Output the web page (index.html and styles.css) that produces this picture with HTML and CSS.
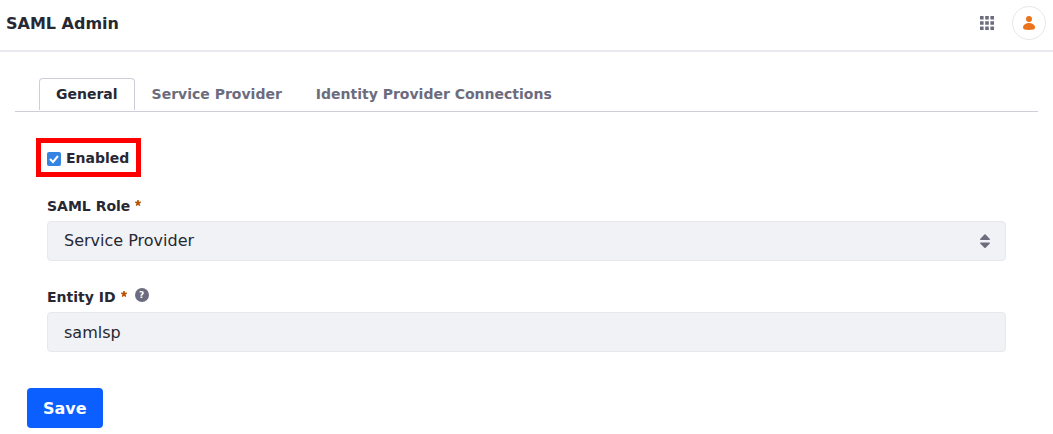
FILE: index.html
```html
<!DOCTYPE html>
<html lang="en">
<head>
<meta charset="utf-8">
<title>SAML Admin</title>
<link rel="stylesheet" href="styles.css">
</head>
<body>
<header class="topbar">
  <h1 class="title">SAML Admin</h1>
  <div class="actions">
    <button class="icon-button" type="button" aria-label="Applications">
      <svg width="14" height="14" viewBox="0 0 14 14" fill="#6b6c7e"><path d="M0 0h3.6v3.6H0zM5.2 0h3.6v3.6H5.2zM10.4 0H14v3.6h-3.6zM0 5.2h3.6v3.6H0zM5.2 5.2h3.6v3.6H5.2zM10.4 5.2H14v3.6h-3.6zM0 10.4h3.6V14H0zM5.2 10.4h3.6V14H5.2zM10.4 10.4H14V14h-3.6z"/></svg>
    </button>
    <button class="icon-button avatar" type="button" aria-label="User profile">
      <svg width="12" height="14" viewBox="0 0 12 14" fill="#eb731c"><circle cx="6" cy="3" r="3"/><path d="M6 7c3.500 0 6 2.300 6 4.500C12 13.300 10 14 6 14s-6-.7-6-2.500C0 9.300 2.500 7 6 7z"/></svg>
    </button>
  </div>
</header>
<main>
  <nav class="tabs">
    <a class="tab active" href="#general">General</a>
    <a class="tab" href="#service-provider">Service Provider</a>
    <a class="tab" href="#connections">Identity Provider Connections</a>
  </nav>
  <form class="form">
    <div class="highlight">
      <label class="check-label"><input class="check" type="checkbox" checked>Enabled</label>
    </div>
    <div class="field">
      <div class="label-row">
        <label for="role">SAML Role</label>
        <svg class="required" width="6" height="6" viewBox="0 0 6 6"><path d="M2.300 0h1.400l.2 1.700L5.700 1.500 6 2.700l-1.600.8L5.300 5.200l-1 .8L3 4.700 1.700 6l-1-.8.9-1.700L0 2.700l.3-1.200 1.800.2z"/></svg>
      </div>
      <div class="select-wrap">
        <select class="control" id="role"><option>Service Provider</option><option>Identity Provider</option></select>
        <svg class="arrows" width="10" height="14" viewBox="0 0 10 14"><path d="M.5 6Q-.3 5.500.4 4.800L4.400.400Q5 0 5.600.400l4 4.400q.7.700-.1 1.200zM.5 8.500h9q.8.500.1 1.200l-4 4q-.6.500-1.200 0l-4-4Q-.3 9 .5 8.500z"/></svg>
      </div>
    </div>
    <div class="field">
      <div class="label-row">
        <label for="entity">Entity ID</label>
        <svg class="required" width="6" height="6" viewBox="0 0 6 6"><path d="M2.300 0h1.400l.2 1.700L5.700 1.500 6 2.700l-1.600.8L5.300 5.200l-1 .8L3 4.700 1.700 6l-1-.8.9-1.700L0 2.700l.3-1.200 1.800.2z"/></svg>
        <span class="help">?</span>
      </div>
      <input class="control" id="entity" type="text" value="samlsp">
    </div>
    <button class="save" type="submit">Save</button>
  </form>
</main>
</body>
</html>
```
FILE: styles.css
```css
* { box-sizing: border-box; }
body {
  margin: 0;
  background: #fff;
  color: #272833;
  font: 16px/24px "DejaVu Sans", sans-serif;
}
.topbar {
  display: flex;
  align-items: center;
  justify-content: space-between;
  height: 52px;
  padding: 0 7px 6px 6px;
  border-bottom: 2px solid #e9e9ef;
}
.title { margin: 3px 0 0; font-size: 16px; line-height: 24px; }
.actions { display: flex; align-items: center; gap: 18px; padding-top: 2px; }
.icon-button {
  display: flex;
  align-items: center;
  justify-content: center;
  padding: 0;
  border: 0;
  background: none;
}
.avatar {
  width: 34px;
  height: 34px;
  border: 1px solid #e7e7ed;
  border-radius: 50%;
}
.tabs {
  display: flex;
  margin: 26px 15px 0;
  padding: 0 24px 1px;
  border-bottom: 1px solid #cdced9;
}
.tab {
  padding: 3px 16px 4px;
  border: 1px solid transparent;
  border-bottom: 0;
  border-radius: 4px 4px 0 0;
  color: #6b6c7e;
  font-size: 14px;
  font-weight: bold;
  line-height: 24px;
  text-decoration: none;
}
.tab.active { border-color: #cdced9; color: #272833; }
.form { padding: 26px 47px 6px; }
.highlight {
  width: fit-content;
  margin-left: -11px;
  padding: 6px 7px 5px 6px;
  border: 5px solid #f00;
}
.check-label {
  display: flex;
  align-items: center;
  gap: 5px;
  font-size: 14px;
  font-weight: bold;
  line-height: 18px;
}
.check {
  appearance: none;
  width: 14px;
  height: 14px;
  margin: 2px 0 0;
  border-radius: 2px;
  background: #3584e4 url("data:image/svg+xml,%3Csvg xmlns='http://www.w3.org/2000/svg' viewBox='0 0 14 14'%3E%3Cpath d='M3 7l3 3 5-6' fill='none' stroke='white' stroke-width='2'/%3E%3C/svg%3E");
}
.field { margin-top: 20px; }
.field + .field { margin-top: 27px; }
.label-row {
  display: flex;
  height: 24px;
  font-size: 14px;
  font-weight: bold;
  line-height: 18px;
}
.required { margin: 3px 0 0 5px; fill: #b95000; }
.help {
  width: 14px;
  height: 14px;
  margin-left: 8px;
  border-radius: 50%;
  background: #6b6c7e;
  color: #fff;
  font-size: 9px;
  line-height: 14px;
  text-align: center;
}
.select-wrap { position: relative; }
.control {
  display: block;
  appearance: none;
  width: 100%;
  height: 40px;
  padding: 0 16px;
  border: 1px solid #e7e7ed;
  border-radius: 4px;
  background: #f1f2f5;
  color: #272833;
  font: inherit;
}
.arrows {
  position: absolute;
  top: 13px;
  right: 16px;
  fill: #6b6c7e;
  pointer-events: none;
}
.save {
  display: block;
  height: 40px;
  margin: 36px 0 0 -20px;
  padding: 2px 16px 0;
  border: 0;
  border-radius: 4px;
  background: #0b5fff;
  color: #fff;
  font: inherit;
  font-weight: bold;
}
```
